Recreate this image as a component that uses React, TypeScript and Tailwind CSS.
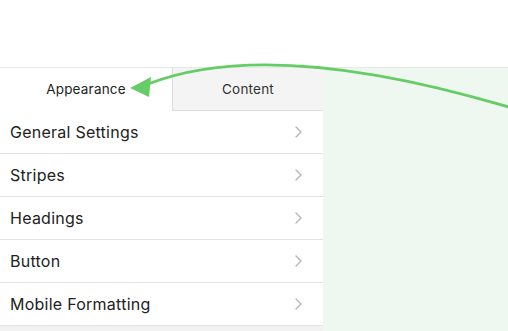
const items = ["General Settings", "Stripes", "Headings", "Button", "Mobile Formatting"];

function Chevron() {
  return (
    <svg width="9" height="14" viewBox="0 0 9 14" className="text-[#b5b5b5]">
      <polyline points="2,2 7,7 2,12" fill="none" stroke="currentColor" strokeWidth="1.4" strokeLinecap="round" strokeLinejoin="round" />
    </svg>
  );
}

export default function App() {
  return (
    <div className="relative w-[508px] h-[331px] overflow-hidden bg-white" style={{ fontFamily: "Inter, 'Noto Sans', sans-serif" }}>
      <div className="h-[68px] border-b border-[#e8e8e8]" />
      <div className="flex h-[263px]">
        <div className="w-[323px] flex flex-col bg-[#f2f2f2]">
          <div className="flex h-[43px] bg-white">
            <div className="w-[172px] flex items-center justify-center text-[13.5px] tracking-[0.2px] text-[#222]">Appearance</div>
            <div className="flex-1 flex items-center justify-center text-[13.5px] tracking-[0.2px] text-[#333] bg-[#f4f4f4] border-l border-b border-[#dcdcdc]">Content</div>
          </div>
          {items.map((t) => (
            <div key={t} className="h-[43px] flex items-center justify-between pl-[10px] pr-[20px] bg-white border-b border-[#e3e3e3]">
              <span className="text-[16px] tracking-[0.25px] text-[#222]">{t}</span>
              <Chevron />
            </div>
          ))}
        </div>
        <div className="flex-1 bg-[#eef8f1]" />
      </div>
      <svg className="absolute inset-0 pointer-events-none" width="508" height="331">
        <path d="M512,108 Q271,36 148,84" fill="none" stroke="#66cc66" strokeWidth="2.8" strokeLinecap="round" />
        <polygon points="130,88 151,77 149,97" fill="#66cc66" />
      </svg>
    </div>
  );
}
